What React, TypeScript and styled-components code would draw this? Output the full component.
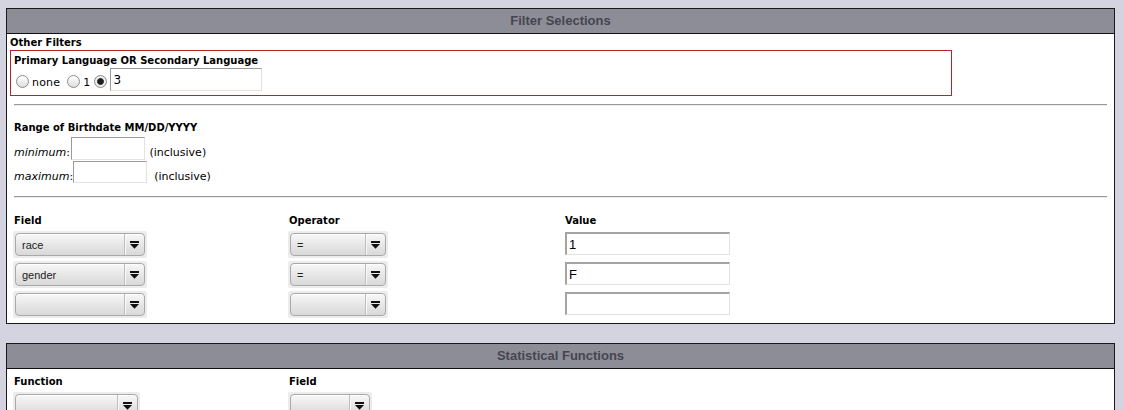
import React from "react";
import styled, { createGlobalStyle } from "styled-components";

const GlobalStyle = createGlobalStyle`
  html, body {
    margin: 0;
    padding: 0;
    background: #d4d4e0;
  }
  body {
    font-family: "DejaVu Sans", Verdana, sans-serif;
    font-size: 11px;
    color: #000;
  }
`;

const Page = styled.div`
  padding: 8px 9px 0 6px;
  display: flex;
  flex-direction: column;
  gap: 19px;
`;

const Panel = styled.section`
  border: 1px solid #1a1a1a;
  background: #fff;
`;

const PanelHeader = styled.div`
  height: 24px;
  line-height: 24px;
  background: #8d8d97;
  border-bottom: 1px solid #111;
  text-align: center;
  font-family: "Liberation Sans", Arial, sans-serif;
  font-weight: bold;
  font-size: 13px;
  color: #45454f;
`;

const PanelBody = styled.div<{ $top: number; $bottom: number }>`
  padding: ${(p) => p.$top}px 0 ${(p) => p.$bottom}px 0;
`;

const GroupTitle = styled.div`
  font-weight: bold;
  font-size: 10px;
  line-height: 14px;
  padding-left: 3px;
`;

const HighlightBox = styled.div`
  box-sizing: border-box;
  width: 942px;
  margin-left: 3px;
  border: 1px solid #b8232a;
  padding: 4px 3px 4px 3px;
`;

const Label = styled.div<{ $mt?: number }>`
  font-weight: bold;
  font-size: 10px;
  line-height: 12px;
  margin-top: ${(p) => p.$mt ?? 0}px;
`;

const RadioRow = styled.div`
  display: flex;
  align-items: center;
  margin-top: 1px;
  padding-left: 2px;
`;

const Radio = styled.input.attrs({ type: "radio" })`
  appearance: none;
  width: 13px;
  height: 13px;
  margin: 4px 3px 0 0;
  border: 1px solid #8c8c8c;
  border-radius: 50%;
  box-sizing: border-box;
  background: linear-gradient(#ffffff, #dedede);
  &:checked {
    background: radial-gradient(circle, #1e1e1e 0 2.6px, #555 3.2px, #f2f2f2 3.8px, #d8d8d8 100%);
  }
`;

const RadioText = styled.span<{ $mr: number }>`
  margin-right: ${(p) => p.$mr}px;
  line-height: 13px;
  padding-top: 5px;
  letter-spacing: 0.2px;
`;

const TextBox = styled.input<{ $w: number; $h: number; $size?: number; $family?: string }>`
  box-sizing: border-box;
  width: ${(p) => p.$w}px;
  height: ${(p) => p.$h}px;
  margin: 0;
  padding: 0 2px;
  border-top: 1px solid #9a9a9a;
  border-left: 1px solid #9a9a9a;
  border-right: 1px solid #e2e2e2;
  border-bottom: 1px solid #e2e2e2;
  background: #fff;
  font-family: ${(p) => p.$family ?? `"DejaVu Sans", sans-serif`};
  font-size: ${(p) => p.$size ?? 12}px;
  color: #000;
  outline: none;
`;

const ValueBox = styled(TextBox)`
  border-top: 2px solid #a3a3a3;
  border-left: 2px solid #a3a3a3;
  margin-top: 2px;
`;

const Section = styled.div`
  padding: 0 7px;
`;

const Rule = styled.hr<{ $mt: number }>`
  margin: ${(p) => p.$mt}px 0 0 0;
  height: 0;
  border: 0;
  border-top: 1px solid #979797;
  border-bottom: 1px solid #ececec;
`;

const DateRow = styled.div<{ $mt: number; $gap: number }>`
  display: flex;
  align-items: flex-end;
  gap: ${(p) => p.$gap}px;
  margin-top: ${(p) => p.$mt}px;
`;

const DateLabel = styled.span<{ $pb?: number }>`
  line-height: 13px;
  padding-bottom: ${(p) => p.$pb ?? 1}px;
  em {
    font-style: italic;
  }
`;

const Grid = styled.div<{ $mt: number }>`
  display: grid;
  grid-template-columns: 275px 276px 165px;
  grid-auto-rows: 30px;
  grid-template-rows: 15px;
  margin-top: ${(p) => p.$mt}px;
`;

const ColHead = styled.div`
  font-weight: bold;
  font-size: 10px;
  line-height: 12px;
`;

const SelectFrame = styled.div`
  display: inline-flex;
  align-self: start;
  justify-self: start;
  margin: 1px 0 0 -1px;
  padding: 2px;
  background: #ececec;
  border-radius: 2px;
`;

const SelectBox = styled.div<{ $w: number }>`
  box-sizing: border-box;
  width: ${(p) => p.$w}px;
  height: 23px;
  display: flex;
  align-items: stretch;
  border: 1px solid #a9a9a9;
  border-radius: 4px;
  background: linear-gradient(#f8f8f8, #e4e4e4 60%, #d9d9d9);
  box-shadow: inset 0 1px 0 #fff;
`;

const SelectText = styled.span`
  flex: 1;
  display: flex;
  align-items: center;
  padding-left: 6px;
  font-family: "Liberation Sans", Arial, sans-serif;
  font-size: 11px;
  color: #222;
`;

const SelectButton = styled.span`
  width: 19px;
  display: flex;
  align-items: center;
  justify-content: center;
  border-left: 1px solid #bdbdbd;
  box-shadow: inset 1px 0 0 #fafafa;
`;

const Arrow = () => (
  <svg width="9" height="8" viewBox="0 0 9 8">
    <rect x="0" y="0" width="9" height="2" fill="#111" />
    <polygon points="0,3 9,3 4.5,7.8" fill="#111" />
  </svg>
);

const Select = ({ w, value }: { w: number; value?: string }) => (
  <SelectFrame>
    <SelectBox $w={w}>
      <SelectText>{value}</SelectText>
      <SelectButton>
        <Arrow />
      </SelectButton>
    </SelectBox>
  </SelectFrame>
);

const rows = [
  { field: "race", op: "=", value: "1" },
  { field: "gender", op: "=", value: "F" },
  { field: "", op: "", value: "" },
];

export default function App() {
  return (
    <>
      <GlobalStyle />
      <Page>
        <Panel>
          <PanelHeader>Filter Selections</PanelHeader>
          <PanelBody $top={2} $bottom={3}>
            <GroupTitle>Other Filters</GroupTitle>
            <HighlightBox>
              <Label>Primary Language OR Secondary Language</Label>
              <RadioRow>
                <Radio name="lang" />
                <RadioText $mr={7}>none</RadioText>
                <Radio name="lang" />
                <RadioText $mr={4}>1</RadioText>
                <Radio name="lang" defaultChecked />
                <TextBox $w={152} $h={23} defaultValue="3" />
              </RadioRow>
            </HighlightBox>
            <Section>
              <Rule $mt={8} />
              <Label $mt={16}>Range of Birthdate MM/DD/YYYY</Label>
              <DateRow $mt={3} $gap={1}>
                <DateLabel>
                  <em>minimum</em>:
                </DateLabel>
                <TextBox $w={74} $h={23} />
                <DateLabel>&nbsp;(inclusive)</DateLabel>
              </DateRow>
              <DateRow $mt={1} $gap={0}>
                <DateLabel $pb={0}>
                  <em>maximum</em>:
                </DateLabel>
                <TextBox $w={74} $h={22} />
                <DateLabel $pb={0}>&nbsp;&nbsp;(inclusive)</DateLabel>
              </DateRow>
              <Rule $mt={13} />
              <Grid $mt={17}>
                <ColHead>Field</ColHead>
                <ColHead>Operator</ColHead>
                <ColHead>Value</ColHead>
                {rows.map((r, i) => (
                  <React.Fragment key={i}>
                    <Select w={130} value={r.field} />
                    <Select w={96} value={r.op} />
                    <ValueBox
                      $w={165}
                      $h={23}
                      $size={13}
                      $family={`"Liberation Sans", Arial, sans-serif`}
                      defaultValue={r.value}
                    />
                  </React.Fragment>
                ))}
              </Grid>
            </Section>
          </PanelBody>
        </Panel>
        <Panel>
          <PanelHeader>Statistical Functions</PanelHeader>
          <PanelBody $top={7} $bottom={4}>
            <Section>
              <Grid $mt={0}>
                <ColHead>Function</ColHead>
                <ColHead>Field</ColHead>
                <span />
                <Select w={123} />
                <Select w={80} />
              </Grid>
            </Section>
          </PanelBody>
        </Panel>
      </Page>
    </>
  );
}
